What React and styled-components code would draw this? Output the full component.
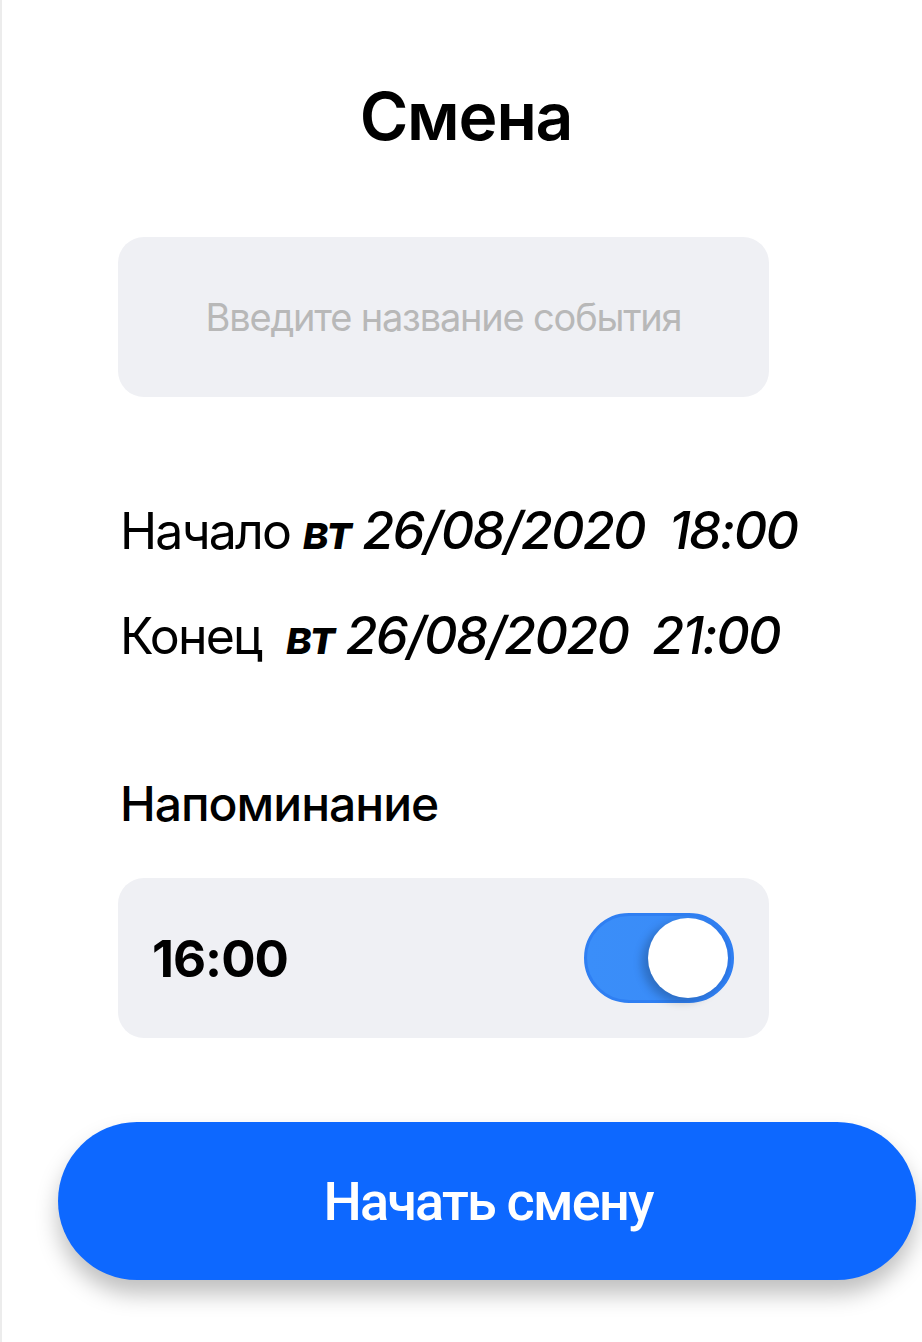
import React from 'react'
import styled, { createGlobalStyle } from 'styled-components'

const GlobalStyle = createGlobalStyle`
  html, body {
    margin: 0;
    padding: 0;
    background: #ffffff;
  }
  body {
    font-family: Inter, "Noto Sans", sans-serif;
    color: #000000;
  }
`

const Screen = styled.div`
  width: 922px;
  height: 1342px;
  box-sizing: border-box;
  border-left: 2px solid #ececec;
  display: flex;
  flex-direction: column;
  overflow: hidden;
`

const Title = styled.h1`
  margin: 76px 0 0;
  padding-left: 8px;
  text-align: center;
  font-size: 66px;
  line-height: 80px;
  font-weight: 600;
  letter-spacing: -1.2px;
`

const Body = styled.div`
  margin-left: 116px;
  width: 651px;
  display: flex;
  flex-direction: column;
`

const Field = styled.div`
  margin-top: 81px;
  height: 160px;
  border-radius: 26px;
  background: #eff0f4;
  display: flex;
  align-items: center;
  justify-content: center;
`

const Placeholder = styled.span`
  font-size: 38px;
  letter-spacing: -1.2px;
  color: #b8b8b8;
`

const Dates = styled.div`
  margin-top: 96px;
  display: flex;
  flex-direction: column;
  gap: 28px;
`

const DateRow = styled.div`
  font-size: 50px;
  line-height: 76px;
  letter-spacing: -1.8px;
  white-space: pre;
  padding-left: 2px;
`

const Day = styled.span`
  font-style: italic;
  font-weight: 700;
  font-size: 47px;
`

const Stamp = styled.span`
  font-style: italic;
  font-weight: 500;
  font-size: 52px;
`

const Label = styled.div`
  margin-top: 99px;
  padding-left: 2px;
  font-size: 48px;
  line-height: 60px;
  font-weight: 500;
  letter-spacing: -1px;
`

const ReminderCard = styled.div`
  margin-top: 44px;
  height: 160px;
  border-radius: 26px;
  background: #eff0f4;
  box-sizing: border-box;
  padding: 0 35px 0 34px;
  display: flex;
  align-items: center;
  justify-content: space-between;
`

const Time = styled.span`
  font-size: 51px;
  font-weight: 700;
  letter-spacing: -1px;
`

const Track = styled.div`
  width: 150px;
  height: 90px;
  box-sizing: border-box;
  border-radius: 45px;
  border: 3px solid #2f7ff2;
  background: linear-gradient(90deg, #3a8ef9 0%, #3a8cf8 60%, #2c78ea 100%);
  display: flex;
  align-items: center;
  justify-content: flex-end;
  padding-right: 3px;
`

const Knob = styled.div`
  width: 80px;
  height: 80px;
  border-radius: 50%;
  background: #ffffff;
  box-shadow: -6px 4px 10px rgba(0, 0, 0, 0.22);
`

const StartButton = styled.button`
  margin: 84px 0 0 56px;
  width: 858px;
  height: 158px;
  border: none;
  border-radius: 79px;
  background: #0d68ff;
  color: #ffffff;
  font-family: Roboto, Inter, sans-serif;
  font-size: 54px;
  font-weight: 500;
  letter-spacing: -1.8px;
  padding: 0 0 0 2px;
  box-shadow: 0 14px 22px rgba(0, 0, 0, 0.25);
`

export default function App () {
  return (
    <>
      <GlobalStyle/>
      <Screen>
        <Title>Смена</Title>
        <Body>
          <Field>
            <Placeholder>Введите название события</Placeholder>
          </Field>
          <Dates>
            <DateRow>Начало <Day>вт</Day> <Stamp>26/08/2020  18:00</Stamp></DateRow>
            <DateRow>Конец  <Day>вт</Day> <Stamp>26/08/2020  21:00</Stamp></DateRow>
          </Dates>
          <Label>Напоминание</Label>
          <ReminderCard>
            <Time>16:00</Time>
            <Track>
              <Knob/>
            </Track>
          </ReminderCard>
        </Body>
        <StartButton>Начать смену</StartButton>
      </Screen>
    </>
  )
}
